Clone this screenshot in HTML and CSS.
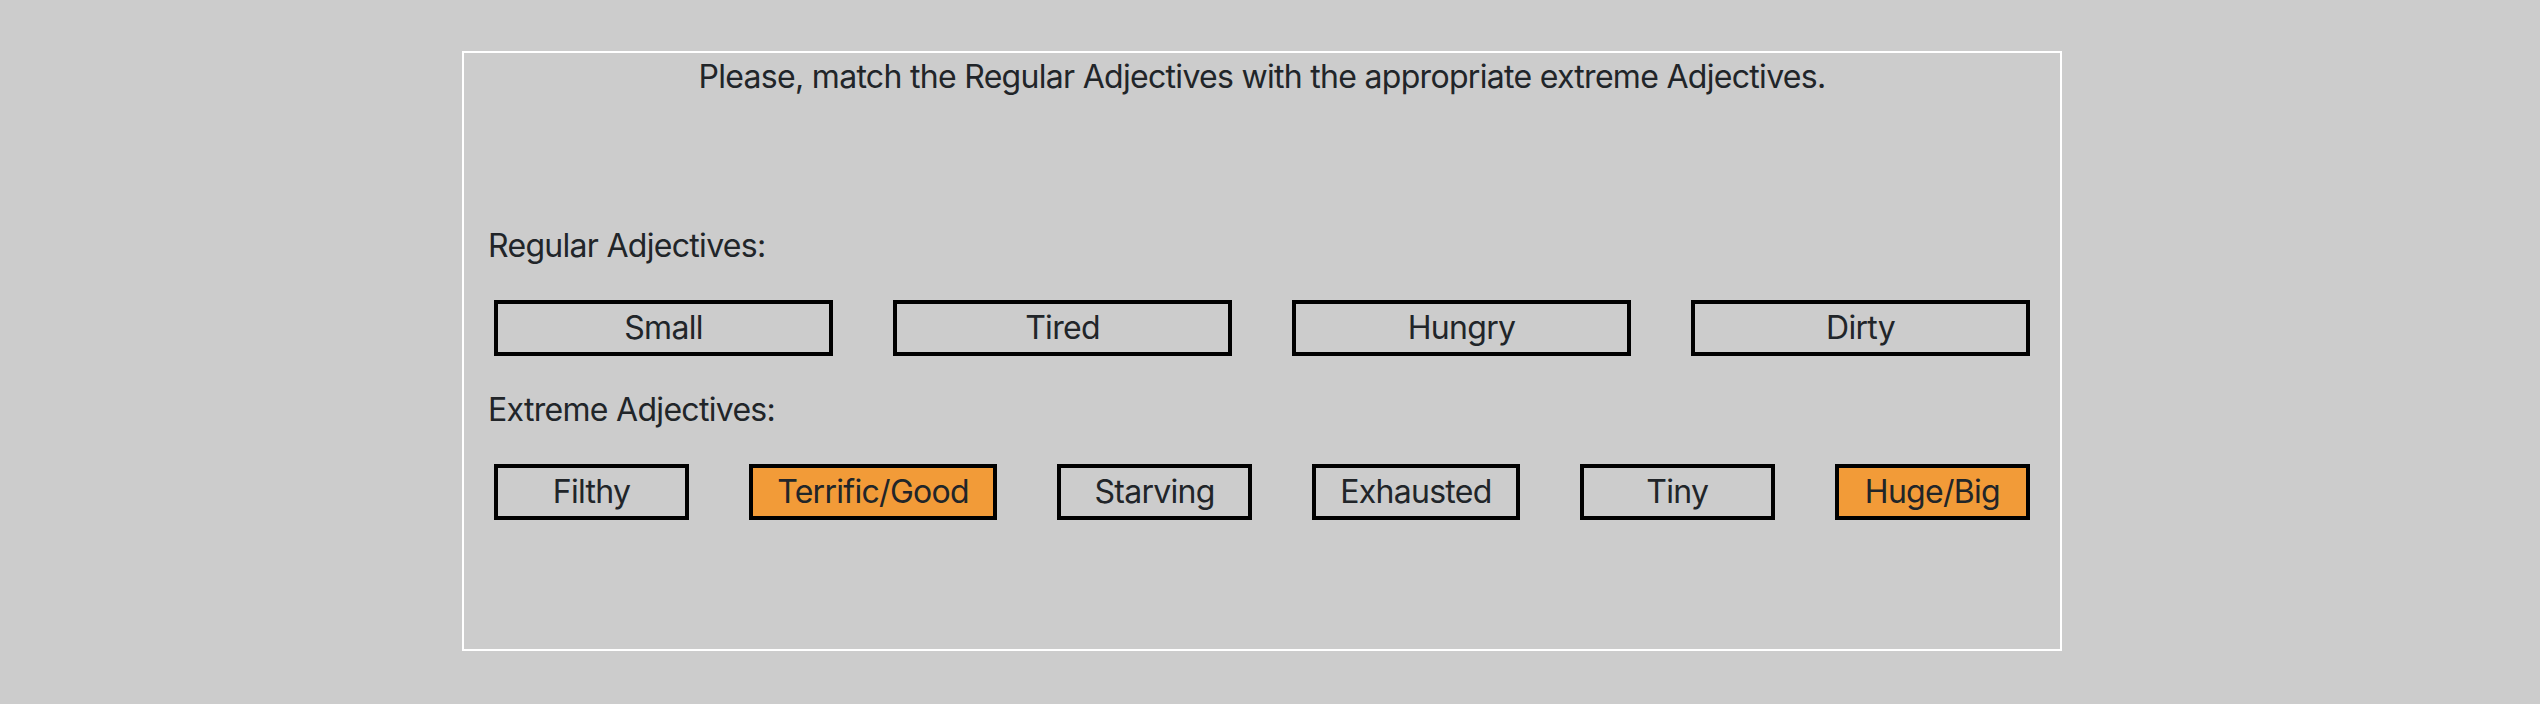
FILE: index.html
```html
<!DOCTYPE html>
<html lang="en">
<head>
<meta charset="utf-8">
<title>Match the adjectives</title>
<link rel="stylesheet" href="styles.css">
</head>
<body>
<div class="board">
  <p class="prompt">Please, match the Regular Adjectives with the appropriate extreme Adjectives.</p>
  <div class="group">
    <div class="label">Regular Adjectives:</div>
    <div class="row row-regular">
      <div class="cell"><div class="word">Small</div></div>
      <div class="cell"><div class="word">Tired</div></div>
      <div class="cell"><div class="word">Hungry</div></div>
      <div class="cell"><div class="word">Dirty</div></div>
    </div>
    <div class="label">Extreme Adjectives:</div>
    <div class="row row-extreme">
      <div class="word word-flex">Filthy</div>
      <div class="word word-flex word-hot">Terrific/Good</div>
      <div class="word word-flex">Starving</div>
      <div class="word word-flex">Exhausted</div>
      <div class="word word-flex">Tiny</div>
      <div class="word word-flex word-hot">Huge/Big</div>
    </div>
  </div>
</div>
</body>
</html>
```

FILE: styles.css
```css
html, body {
  margin: 0;
  padding: 0;
  background: #cccccc;
}

body {
  font-family: Inter, "Noto Sans", "Liberation Sans", sans-serif;
  font-size: 32px;
  line-height: 48px;
  letter-spacing: -0.7px;
  color: #212529;
  padding: 51px 0 0 462px;
}

.board {
  width: 1596px;
  height: 596px;
  border: 2px solid #ffffff;
  box-sizing: content-box;
}

.prompt {
  margin: 0;
  text-align: center;
}

.group {
  margin-top: 121px;
}

.label {
  padding-left: 24px;
}

.row {
  display: flex;
}

.cell {
  flex: 1 1 0;
  min-width: 0;
}

.word {
  margin: 30px;
  border: 4px solid #000000;
  height: 48px;
  text-align: center;
  white-space: nowrap;
}

.word-flex {
  flex: 1 1 0;
  padding: 0 24px;
}

.word-hot {
  background: #f29b38;
}
```
